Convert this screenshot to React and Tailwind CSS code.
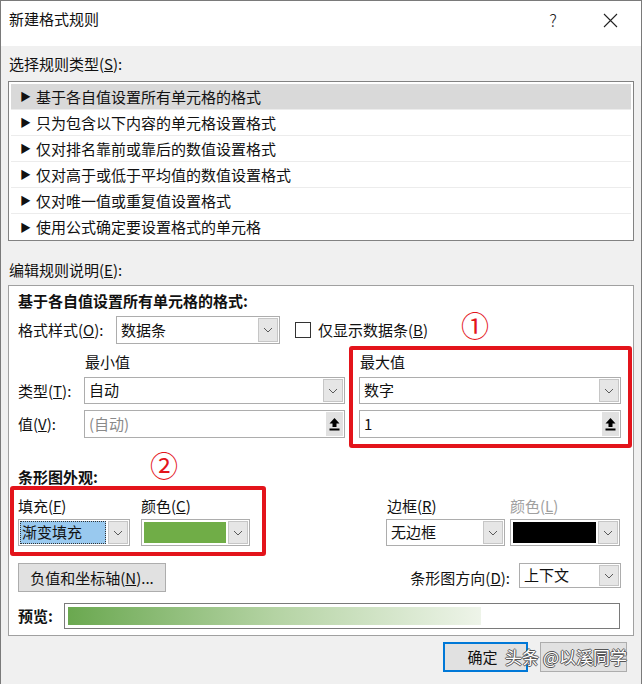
import React from "react";

const Chevron = () => (
  <svg width="10" height="6" viewBox="0 0 10 6" fill="none">
    <polyline points="1,1 5,5 9,1" stroke="#5a5a5a" strokeWidth="1" />
  </svg>
);

const Upload = () => (
  <svg width="11" height="14" viewBox="0 0 11 14">
    <polygon points="5.5,1 10.5,6.5 7.5,6.5 7.5,10 3.5,10 3.5,6.5 0.5,6.5" fill="#000" />
    <rect x="0.5" y="11.5" width="10" height="2" fill="#000" />
  </svg>
);

const Select = ({ w, children, btn = "w-[20px]" }) => (
  <div className={`flex h-full items-stretch border border-[#adadad] bg-white ${w}`}>
    <div className="flex flex-1 items-center overflow-hidden px-[4px]">{children}</div>
    <div className={`m-[1px] flex items-center justify-center border border-[#c6c6c6] bg-[#e6e6e6] ${btn}`}>
      <Chevron />
    </div>
  </div>
);

const Input = ({ w, children, muted }) => (
  <div className={`flex h-full items-stretch border border-[#adadad] bg-white ${w}`}>
    <div className={`flex flex-1 items-center px-[4px] ${muted ? "text-[#8a8a8a]" : ""}`}>{children}</div>
    <div className="m-[1px] flex w-[17px] items-center justify-center bg-[#e1e1e1]">
      <Upload />
    </div>
  </div>
);

const rules = [
  "基于各自值设置所有单元格的格式",
  "只为包含以下内容的单元格设置格式",
  "仅对排名靠前或靠后的数值设置格式",
  "仅对高于或低于平均值的数值设置格式",
  "仅对唯一值或重复值设置格式",
  "使用公式确定要设置格式的单元格",
];

export default function App() {
  return (
    <div
      className="flex h-[684px] w-[642px] flex-col overflow-hidden border-x border-t border-[#7a7a7a] bg-[#f0f0f0] text-[15px] text-[#111]"
      style={{ fontFamily: '"Noto Sans CJK SC", "Liberation Sans", sans-serif' }}
    >
      {/* title bar */}
      <div className="flex h-[45px] shrink-0 items-start bg-white pl-[8px] pt-[8px]">
        <span className="leading-[20px]">新建格式规则</span>
        <span className="ml-auto mr-[46px] text-[17px] font-light leading-[22px] text-[#222]">?</span>
        <svg className="mr-[23px] mt-[4px]" width="15" height="15" viewBox="0 0 15 15">
          <path d="M1 1 L14 14 M14 1 L1 14" stroke="#222" strokeWidth="1.1" />
        </svg>
      </div>

      <div className="flex flex-col px-[7px]">
        <div className="mt-[8px] h-[20px] pl-[1px] leading-[20px]">
          选择规则类型(<span className="underline">S</span>):
        </div>

        <div className="mt-[7px] h-[160px] border border-[#828282] bg-white px-[2px] pt-[2px]">
          {rules.map((r, i) => (
            <div
              key={r}
              className={`flex h-[26px] items-center border-b border-[#ececec] pl-[9px] ${i === 0 ? "bg-[#d9d9d9]" : ""} ${i === 5 ? "border-b-0" : ""}`}
            >
              <span className="mr-[5px] text-[11px] leading-none">▶</span>
              <span className="leading-[20px]">{r}</span>
            </div>
          ))}
        </div>

        <div className="mt-[19px] h-[20px] pl-[1px] leading-[20px]">
          编辑规则说明(<span className="underline">E</span>):
        </div>

        {/* edit panel */}
        <div className="relative mt-[5px] h-[351px] border border-[#a0a0a0] bg-white pl-[9px] pr-[12px] pt-[5px]">
          <div className="h-[20px] font-bold leading-[20px]">基于各自值设置所有单元格的格式:</div>

          <div className="mt-[5px] flex h-[28px] items-center">
            <span className="w-[98px] leading-[20px]">
              格式样式(<span className="underline">O</span>):
            </span>
            <Select w="w-[164px]">数据条</Select>
            <div className="ml-[15px] h-[16px] w-[16px] border border-[#333] bg-white" />
            <span className="ml-[7px] leading-[20px]">
              仅显示数据条(<span className="underline">B</span>)
            </span>
          </div>

          <div className="mt-[8px] flex h-[20px] leading-[20px]">
            <span className="ml-[67px] w-[275px]">最小值</span>
            <span>最大值</span>
          </div>

          <div className="mt-[5px] flex h-[27px] items-center">
            <span className="w-[66px] leading-[20px]">
              类型(<span className="underline">T</span>):
            </span>
            <Select w="w-[261px]">自动</Select>
            <div className="w-[14px]" />
            <Select w="w-[262px]">数字</Select>
          </div>

          <div className="mt-[6px] flex h-[28px] items-center">
            <span className="w-[66px] leading-[20px]">
              值(<span className="underline">V</span>):
            </span>
            <Input w="w-[261px]" muted>(自动)</Input>
            <div className="w-[14px]" />
            <Input w="w-[262px]">1</Input>
          </div>

          <div className="mt-[29px] h-[20px] font-bold leading-[20px]">条形图外观:</div>

          <div className="mt-[9px] flex h-[20px] leading-[20px]">
            <span className="w-[123px]">
              填充(<span className="underline">F</span>)
            </span>
            <span className="w-[246px]">
              颜色(<span className="underline">C</span>)
            </span>
            <span className="w-[123px]">
              边框(<span className="underline">R</span>)
            </span>
            <span className="text-[#a0a0a0]">
              颜色(<span className="underline">L</span>)
            </span>
          </div>

          <div className="mt-[3px] flex h-[27px] items-center">
            <div className="flex h-full w-[112px] items-stretch border border-[#adadad] bg-white">
              <div className="m-[1px] flex flex-1 items-center border border-dotted border-[#333] bg-[#99c9ef] px-[1px]">
                渐变填充
              </div>
              <div className="m-[1px] flex w-[20px] items-center justify-center border border-[#c6c6c6] bg-[#e6e6e6]">
                <Chevron />
              </div>
            </div>
            <div className="ml-[11px] flex h-full w-[109px] items-stretch border border-[#adadad] bg-white">
              <div className="m-[2px] flex-1 bg-[#70ad47]" />
              <div className="my-[1px] mr-[1px] flex w-[20px] items-center justify-center border border-[#c6c6c6] bg-[#e6e6e6]">
                <Chevron />
              </div>
            </div>
            <div className="ml-[136px] h-full">
              <Select w="w-[119px]">无边框</Select>
            </div>
            <div className="ml-[5px] flex h-full w-[110px] items-stretch border border-[#adadad] bg-white">
              <div className="m-[2px] flex-1 bg-black" />
              <div className="my-[1px] mr-[1px] flex w-[20px] items-center justify-center border border-[#c6c6c6] bg-[#e6e6e6]">
                <Chevron />
              </div>
            </div>
          </div>

          <div className="mt-[17px] flex h-[29px] items-start">
            <button className="flex h-[29px] w-[148px] items-center justify-center border border-[#adadad] bg-[#e1e1e1] leading-[20px]">
              负值和坐标轴(<span className="underline">N</span>)...
            </button>
            <span className="ml-auto mr-[9px] mt-[5px] leading-[20px]">
              条形图方向(<span className="underline">D</span>):
            </span>
            <div className="h-[25px]">
              <Select w="w-[102px]">上下文</Select>
            </div>
          </div>

          <div className="mt-[11px] flex h-[26px] items-center">
            <span className="w-[46px] font-bold leading-[20px]">预览:</span>
            <div className="flex h-full w-[556px] border border-[#7a7a7a] bg-white p-[3px]">
              <div className="h-full w-[413px] bg-gradient-to-r from-[#6aa84f] via-[#b4d3a3] to-[#eef4e9]" />
            </div>
          </div>

          {/* annotations */}
          <div className="absolute left-[340px] top-[60px] h-[102px] w-[283px] rounded-[3px] border-4 border-[#e3141b]" />
          <div className="absolute left-[1px] top-[200px] h-[70px] w-[256px] rounded-[3px] border-4 border-[#e3141b]" />
          <div className="absolute left-[452px] top-[25px] text-[28px] leading-none text-[#e3141b]">①</div>
          <div className="absolute left-[141px] top-[165px] text-[28px] leading-none text-[#e3141b]">②</div>
        </div>

        {/* footer */}
        <div className="relative mt-[6px] flex h-[30px] justify-end pr-[7px]">
          <button className="h-[30px] w-[85px] border-2 border-[#0078d7] bg-[#e1e1e1] pr-[6px] leading-[20px]">确定</button>
          <button className="ml-[12px] h-[30px] w-[87px] border border-[#adadad] bg-[#e1e1e1]" />
          <div className="absolute right-[7px] top-[4px] text-[17px] leading-[22px] text-white [text-shadow:1px_0_0_#555,-1px_0_0_#555,0_1px_0_#555,0_-1px_0_#555]">
            头条 @以溪同学
          </div>
        </div>
      </div>
    </div>
  );
}
